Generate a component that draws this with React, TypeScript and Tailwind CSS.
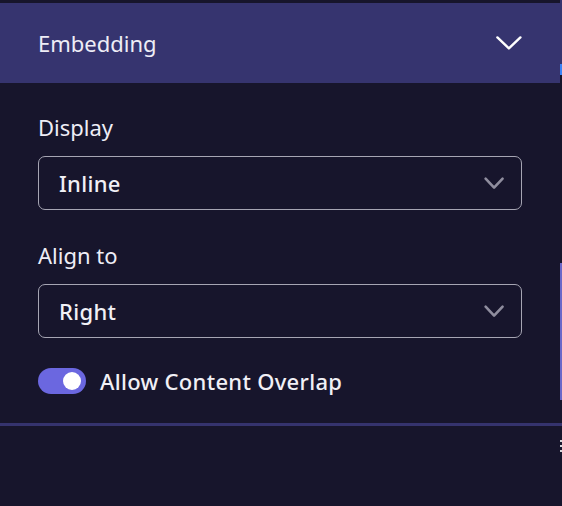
function Chevron({ className, w, h, stroke }: { className: string; w: number; h: number; stroke: number }) {
    return (
        <svg width={w + stroke * 2} height={h + stroke * 2} viewBox={`0 0 ${w + stroke * 2} ${h + stroke * 2}`} className={className} fill="none">
            <polyline
                points={`${stroke},${stroke} ${stroke + w / 2},${stroke + h} ${stroke + w},${stroke}`}
                stroke="currentColor"
                strokeWidth={stroke}
                strokeLinecap="round"
                strokeLinejoin="round"
            />
        </svg>
    );
}

function Select({ value }: { value: string }) {
    return (
        <div className="mt-[14px] flex h-[54px] items-center justify-between rounded-[7px] border border-[#a6a5b3] pl-5 pr-[16px]">
            <span className="text-[22px] font-medium tracking-[0.3px] text-[#f1f0f6]">{value}</span>
            <Chevron className="text-[#8f8d9e]" w={17} h={9} stroke={2.6} />
        </div>
    );
}

export default function App() {
    return (
        <div className="flex h-[506px] w-[562px] bg-[#17152c] font-['Noto_Sans',sans-serif]">
            <div className="flex w-[560px] flex-col">
                <div className="h-[3px] bg-[#17152b]" />
                <div className="flex h-[80px] items-center justify-between bg-[#36346f] pl-[38px] pr-[37px]">
                    <span className="text-[22px] text-[#eeedf6]">Embedding</span>
                    <Chevron className="text-white" w={23} h={11} stroke={2.4} />
                </div>
                <div className="flex flex-col px-[38px] pt-[29px]">
                    <label className="text-[22px] leading-[30px] text-[#eeedf6]">Display</label>
                    <Select value="Inline" />
                    <label className="mt-[30px] text-[22px] leading-[30px] text-[#eeedf6]">Align to</label>
                    <Select value="Right" />
                    <div className="mt-[28px] flex h-[30px] items-center gap-[14px]">
                        <div className="flex h-[26px] w-[48px] items-center justify-end rounded-full bg-[#6b67e0] px-[5px]">
                            <div className="h-[18px] w-[18px] rounded-full bg-white" />
                        </div>
                        <span className="text-[22px] font-medium leading-[30px] tracking-[0.3px] text-[#f1f0f6]">Allow Content Overlap</span>
                    </div>
                </div>
                <div className="mt-[27px] h-[3px] bg-[#35336e]" />
            </div>
            <div className="flex w-[2px] flex-col">
                <div className="h-[64px] bg-[#36346f]" />
                <div className="h-[11px] bg-[#3b82f6]" />
                <div className="h-[188px]" />
                <div className="h-[137px] bg-[#6b67c8]" />
                <div className="h-[23px]" />
                <div className="h-[3px] bg-[#35336e]" />
                <div className="h-[14px]" />
                <div className="h-[2px] bg-[#d4d4d8]" />
                <div className="h-[3px]" />
                <div className="h-[2px] bg-[#d4d4d8]" />
                <div className="h-[3px]" />
                <div className="h-[2px] bg-[#d4d4d8]" />
            </div>
        </div>
    );
}
